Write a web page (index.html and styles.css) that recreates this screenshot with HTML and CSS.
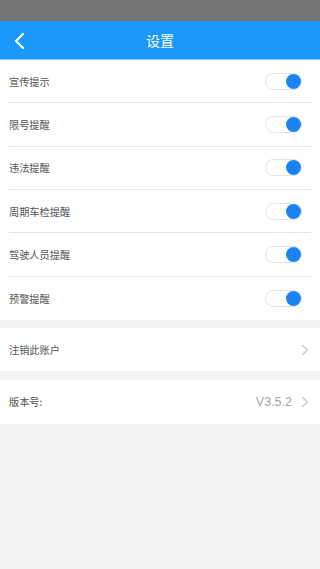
FILE: index.html
```html
<!DOCTYPE html>
<html lang="zh-CN">
<head>
<meta charset="utf-8">
<meta name="viewport" content="width=320">
<link rel="stylesheet" href="styles.css">
</head>
<body>
<div class="statusbar"></div>
<header class="navbar">
  <span class="back">
    <svg width="12" height="16" viewBox="0 0 12 16"><path d="M10 1 L3 8 L10 15" fill="none" stroke="#fff" stroke-width="2.2" stroke-linecap="round" stroke-linejoin="round"/></svg>
  </span>
  <h1 class="title">设置</h1>
</header>
<section class="group">
  <div class="row"><span class="label">宣传提示</span><span class="switch"><span class="knob"></span></span></div>
  <div class="row"><span class="label">限号提醒</span><span class="switch"><span class="knob"></span></span></div>
  <div class="row"><span class="label">违法提醒</span><span class="switch"><span class="knob"></span></span></div>
  <div class="row"><span class="label">周期车检提醒</span><span class="switch"><span class="knob"></span></span></div>
  <div class="row"><span class="label">驾驶人员提醒</span><span class="switch"><span class="knob"></span></span></div>
  <div class="row last"><span class="label">预警提醒</span><span class="switch"><span class="knob"></span></span></div>
</section>
<section class="group gap">
  <div class="row last"><span class="label">注销此账户</span><span class="arrow"><svg width="8" height="12" viewBox="0 0 8 12"><path d="M1 0.8 L6.6 6 L1 11.2" fill="none" stroke="#a8a8a8" stroke-width="1"/></svg></span></div>
</section>
<section class="group gap2">
  <div class="row last"><span class="label">版本号:</span><span class="value">V3.5.2</span><span class="arrow"><svg width="8" height="12" viewBox="0 0 8 12"><path d="M1 0.8 L6.6 6 L1 11.2" fill="none" stroke="#a8a8a8" stroke-width="1"/></svg></span></div>
</section>
</body>
</html>
```
FILE: styles.css
```css
html, body {
  margin: 0;
  padding: 0;
  background: #f4f4f4;
  font-family: "Noto Sans CJK SC", "Liberation Sans", sans-serif;
}
.statusbar {
  height: 21px;
  background: #757575;
}
.navbar {
  height: 38px;
  background: #1a98fc;
  border-bottom: 1px solid #8fcbfb;
  display: flex;
  align-items: center;
  justify-content: center;
  position: relative;
}
.back {
  position: absolute;
  left: 13px;
  top: 12px;
  width: 12px;
  height: 16px;
  display: flex;
}
.title {
  margin: 0;
  font-size: 14px;
  font-weight: normal;
  color: #fff;
  line-height: 1;
}
.group {
  background: #fff;
  padding: 0 9px;
}
.gap { margin-top: 8px; }
.gap2 { margin-top: 9px; }
.row {
  height: 43.33px;
  box-sizing: border-box;
  border-bottom: 1px solid #e6e6e6;
  display: flex;
  align-items: center;
}
.row.last { border-bottom: none; }
.label {
  flex: 1;
  font-size: 10.2px;
  color: #555;
}
.switch {
  width: 37px;
  height: 17px;
  box-sizing: border-box;
  border: 1px solid #e4e4e4;
  border-radius: 9px;
  background: #fff;
  margin-right: 9px;
  display: flex;
  align-items: center;
  justify-content: flex-end;
  padding-right: 0;
}
.knob {
  flex: none;
  width: 15px;
  height: 15px;
  border-radius: 50%;
  background: #1b82f3;
}
.value {
  font-family: "Liberation Sans", sans-serif;
  font-size: 12.5px;
  color: #a6a6a6;
  margin-right: 9px;
}
.arrow {
  display: flex;
  width: 8px;
  height: 12px;
  margin-right: 2px;
}
```
